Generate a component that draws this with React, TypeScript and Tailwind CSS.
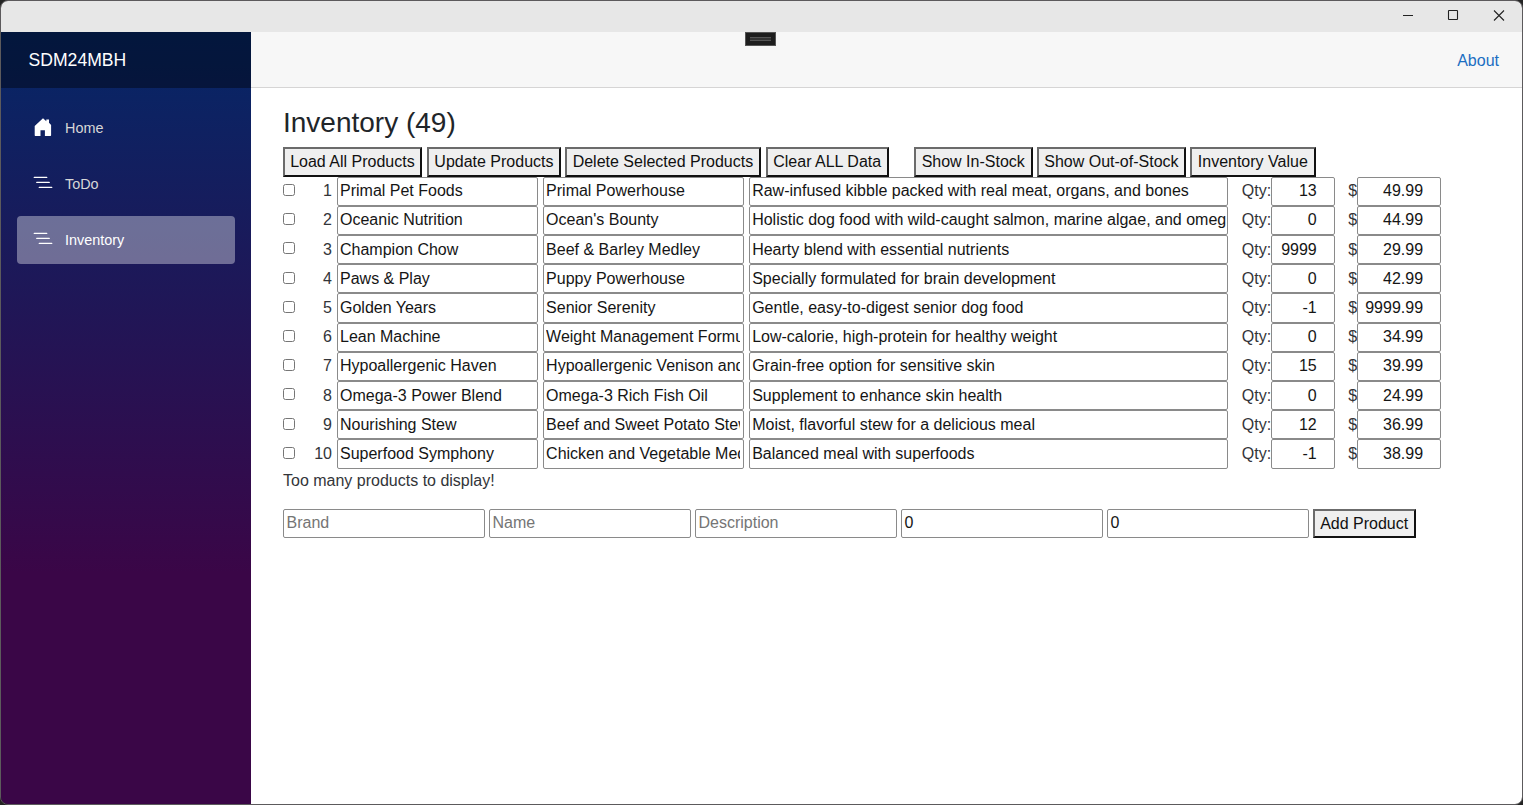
import React from "react";

const products = [
  ["Primal Pet Foods", "Primal Powerhouse", "Raw-infused kibble packed with real meat, organs, and bones", "13", "49.99"],
  ["Oceanic Nutrition", "Ocean's Bounty", "Holistic dog food with wild-caught salmon, marine algae, and omega-3", "0", "44.99"],
  ["Champion Chow", "Beef & Barley Medley", "Hearty blend with essential nutrients", "9999", "29.99"],
  ["Paws & Play", "Puppy Powerhouse", "Specially formulated for brain development", "0", "42.99"],
  ["Golden Years", "Senior Serenity", "Gentle, easy-to-digest senior dog food", "-1", "9999.99"],
  ["Lean Machine", "Weight Management Formula", "Low-calorie, high-protein for healthy weight", "0", "34.99"],
  ["Hypoallergenic Haven", "Hypoallergenic Venison and Pea", "Grain-free option for sensitive skin", "15", "39.99"],
  ["Omega-3 Power Blend", "Omega-3 Rich Fish Oil", "Supplement to enhance skin health", "0", "24.99"],
  ["Nourishing Stew", "Beef and Sweet Potato Stew", "Moist, flavorful stew for a delicious meal", "12", "36.99"],
  ["Superfood Symphony", "Chicken and Vegetable Medley", "Balanced meal with superfoods", "-1", "38.99"],
];

const field =
  "block h-[29.2px] shrink-0 rounded-[2px] border border-[#8a8a8a] bg-white px-[2.5px] py-0 text-[16px] text-[#151515] outline-none placeholder:text-[#757575]";

function Button({ children, className = "" }: { children: React.ReactNode; className?: string }) {
  return (
    <button
      className={`flex h-[30px] shrink-0 justify-center whitespace-nowrap border-2 border-t-[#6b6b6b] border-l-[#6b6b6b] border-r-[#111] border-b-[#111] bg-[#efefef] p-0 pr-[0.5px] text-[16px] leading-[25px] text-[#111] ${className}`}
    >
      {children}
    </button>
  );
}

function HomeIcon() {
  return (
    <svg width="20" height="20" viewBox="0 0 20 20" fill="white">
      <path d="M10 1.300 1.700 9v9.200q0 .7.700.700h5.100v-5.600h4.400v5.600h5.500q.7 0 .7-.7V8L16 5.700V2.500h-2.700v1.700z" />
    </svg>
  );
}

function ListIcon() {
  return (
    <svg width="20" height="20" viewBox="0 0 16 16" fill="white">
      <path
        fillRule="evenodd"
        d="M4.5 11.5A.5.5 0 0 1 5 11h10a.5.5 0 0 1 0 1H5a.5.5 0 0 1-.5-.5zm-2-4A.5.5 0 0 1 3 7h10a.5.5 0 0 1 0 1H3a.5.5 0 0 1-.5-.5zm-2-4A.5.5 0 0 1 1 3h10a.5.5 0 0 1 0 1H1a.5.5 0 0 1-.5-.5z"
      />
    </svg>
  );
}

function NavItem({ icon, label, active = false }: { icon: React.ReactNode; label: string; active?: boolean }) {
  return (
    <a
      className={`flex h-12 items-center rounded-[4px] pl-4 text-[14.4px] ${
        active ? "bg-white/37 text-white" : "text-[#d7d7d7]"
      }`}
    >
      <span className="-mt-[3px] mr-3 block w-5">{icon}</span>
      <span className="pt-px">{label}</span>
    </a>
  );
}

function TitleBar() {
  return (
    <header className="flex h-[31px] shrink-0 justify-end bg-[#e7e7e7]">
      <svg width="136" height="30" viewBox="0 0 136 30" fill="none" stroke="#222" strokeWidth="1.1">
        <path d="M17 14.5h10" />
        <rect x="62.500" y="9.500" width="9" height="9" rx="0.5" />
        <path d="M108 9.500l10 10M118 9.500l-10 10" />
      </svg>
    </header>
  );
}

export default function App() {
  return (
    <div className="h-[805px] w-[1523px] overflow-hidden bg-[#242424] font-['Liberation_Sans',Arial,sans-serif] text-[16px] text-[#333539]">
      <div className="relative flex h-full flex-col overflow-hidden rounded-[8px] border border-[#5c5a5c]">
        <TitleBar />
        <div className="flex min-h-0 flex-1">
          <aside className="w-[250px] shrink-0 bg-[linear-gradient(180deg,#052767_0%,#3a0647_70%)]">
            <div className="flex h-14 items-center bg-black/40 pl-[27.5px] text-[17.6px] text-white">SDM24MBH</div>
            <nav className="flex flex-col gap-2 px-4 pt-4">
              <NavItem icon={<HomeIcon />} label="Home" />
              <NavItem icon={<ListIcon />} label="ToDo" />
              <NavItem icon={<ListIcon />} label="Inventory" active />
            </nav>
          </aside>
          <main className="min-w-0 flex-1 bg-white">
            <div className="flex h-14 items-center justify-end border-b border-[#d6d5d5] bg-[#f7f7f7] pr-[23px] pt-[2px] text-[#1b6ec2]">
              About
            </div>
            <section className="pl-8 pt-[18px]">
              <h1 className="h-[41px] text-[28px] leading-[34px] text-[#212529]">Inventory (49)</h1>
              <div className="flex h-[29.7px]">
                <Button className="w-[139.400px]">Load All Products</Button>
                <Button className="ml-[4.600px] w-[134.400px]">Update Products</Button>
                <Button className="ml-[3.600px] w-[196.400px]">Delete Selected Products</Button>
                <Button className="ml-[4.600px] w-[123px]">Clear ALL Data</Button>
                <Button className="ml-[25px] w-[119px]">Show In-Stock</Button>
                <Button className="ml-[4px] w-[149.400px]">Show Out-of-Stock</Button>
                <Button className="ml-[4px] w-[125.400px]">Inventory Value</Button>
              </div>
              {products.map(([brand, name, description, qty, price], i) => (
                <div key={name} className="flex h-[29.2px] items-center">
                  <input
                    type="checkbox"
                    className="-mt-[2.500px] size-[12px] shrink-0 appearance-none rounded-[2.5px] border border-[#767676] bg-white"
                  />
                  <span className="mr-[4.500px] w-[37px] shrink-0 text-right">{i + 1}</span>
                  <input className={`${field} w-[201.2px]`} defaultValue={brand} />
                  <input className={`${field} ml-[4.900px] w-[201.2px]`} defaultValue={name} />
                  <input className={`${field} ml-[4.900px] w-[479.600px] pr-px`} defaultValue={description} />
                  <span className="ml-[13.500px] w-[29px] shrink-0">Qty:</span>
                  <input className={`${field} w-[64px] pr-[17px]! text-right`} defaultValue={qty} />
                  <span className="ml-[13.500px] w-[8.800px] shrink-0">$</span>
                  <input className={`${field} w-[84px] pr-[17px]! text-right`} defaultValue={price} />
                </div>
              ))}
              <p className="h-[40.3px] pt-[0.3px] leading-[24px]">Too many products to display!</p>
              <form className="flex gap-[4.4px]">
                <input className={`${field} w-[201.6px]`} placeholder="Brand" />
                <input className={`${field} w-[201.6px]`} placeholder="Name" />
                <input className={`${field} w-[201.6px]`} placeholder="Description" />
                <input className={`${field} w-[201.6px]`} defaultValue="0" />
                <input className={`${field} w-[201.6px]`} defaultValue="0" />
                <Button className="h-[29px]! w-[103px]">Add Product</Button>
              </form>
            </section>
          </main>
        </div>
        <div className="absolute left-[744px] top-[31px] flex h-[14px] w-[31px] items-center justify-center border border-[#555] bg-[#1e1e1e]">
          <span className="h-[4px] w-[21px] border-y border-[#555] bg-[#333]" />
        </div>
      </div>
    </div>
  );
}
